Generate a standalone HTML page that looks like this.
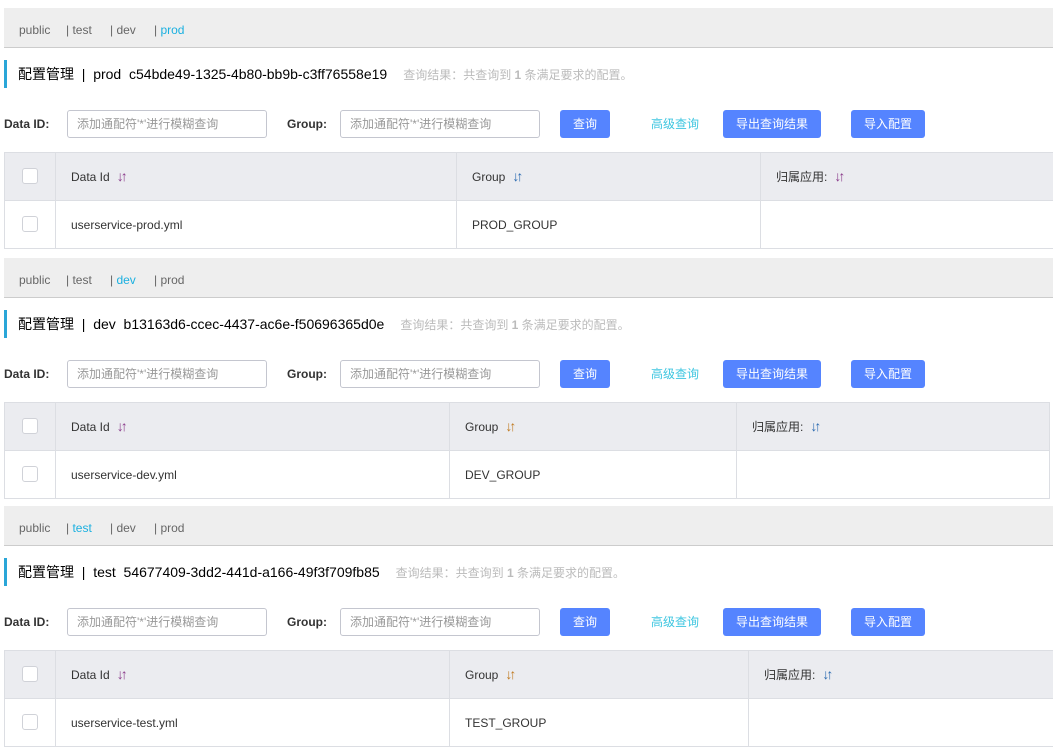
<!DOCTYPE html>
<html><head><meta charset="utf-8"><style>
body{margin:0;width:1053px;height:751px;overflow:hidden;background:#fff;font-family:"Liberation Sans","Noto Sans CJK SC",sans-serif;color:#333;position:relative}
.s{position:absolute;left:0;width:1053px;height:250px}
.tab{position:absolute;left:4px;right:0;top:8px;height:39px;background:#eee;border-bottom:1px solid #ccc;font-size:12px;color:#666}
.tab span{position:absolute;top:15px;line-height:14px}
.tab .a{color:#1ab0e0}
.tit{position:absolute;left:4px;top:60px;height:28px;border-left:3px solid #2aa6d8;padding-left:11px;line-height:28px;font-size:14px;color:#000;white-space:nowrap}
.tit i{font-style:normal;font-size:12px;color:#bbb;margin-left:16px}
.lab{position:absolute;top:117px;line-height:14px;font-size:12px;font-weight:bold;color:#333}
.inp{position:absolute;top:110px;width:198px;height:26px;border:1px solid #c4c6cf;border-radius:3px;font-size:12px;color:#999;line-height:26px;text-indent:9px}
.btn{position:absolute;top:110px;height:28px;background:#5584ff;color:#fff;border-radius:3px;font-size:12px;text-align:center;line-height:28px}
.lnk{position:absolute;left:651px;top:110px;line-height:28px;font-size:12px;color:#3ec6e0}
.tb{position:absolute;left:4px;right:0;top:152px;height:95px;border:1px solid #dcdee3;border-right:none;font-size:12px}
.hd{position:absolute;left:0;right:0;top:0;height:47px;background:#ebecf0;border-bottom:1px solid #dcdee3}
.c{position:absolute;top:0;bottom:0;border-left:1px solid #dcdee3}
.t{position:absolute;font-size:12px;color:#333;line-height:16px;height:16px;white-space:nowrap}
.cb{position:absolute;left:17px;width:14px;height:14px;border:1px solid #d0d2d8;border-radius:3px;background:#fff}
.ar{font-size:14px;margin-left:7px;letter-spacing:-3px;vertical-align:top;line-height:14px}
</style></head><body>

<div class="s" style="top:0">
<div class="tab"><span style="left:15px">public</span><span style="left:62px">| test</span><span style="left:106px">| dev</span><span class="a" style="left:150px"><b style="font-weight:normal;color:#666">|</b> prod</span></div>
<div class="tit">配置管理 &nbsp;|&nbsp; prod &nbsp;c54bde49-1325-4b80-bb9b-c3ff76558e19<i>查询结果：共查询到 <b>1</b> 条满足要求的配置。</i></div>
<div class="lab" style="left:4px">Data ID:</div><div class="inp" style="left:67px">添加通配符'*'进行模糊查询</div>
<div class="lab" style="left:287px">Group:</div><div class="inp" style="left:340px">添加通配符'*'进行模糊查询</div>
<div class="btn" style="left:560px;width:50px">查询</div><div class="lnk">高级查询</div>
<div class="btn" style="left:723px;width:98px">导出查询结果</div><div class="btn" style="left:851px;width:74px">导入配置</div>
<div class="tb"><div class="hd"></div>
<div class="c" style="left:50px"></div><div class="c" style="left:451px"></div><div class="c" style="left:755px"></div>
<div class="cb" style="top:15px"></div><div class="cb" style="top:63px"></div>
<div class="t" style="left:66px;top:16px">Data Id<span class="ar" style="color:#8a3a8a">↓↑</span></div>
<div class="t" style="left:467px;top:16px">Group<span class="ar" style="color:#2a6ab0">↓↑</span></div>
<div class="t" style="left:771px;top:16px">归属应用:<span class="ar" style="color:#8a3a8a">↓↑</span></div>
<div class="t" style="left:66px;top:64px">userservice-prod.yml</div>
<div class="t" style="left:467px;top:64px">PROD_GROUP</div>
</div></div>

<div class="s" style="top:250px">
<div class="tab"><span style="left:15px">public</span><span style="left:62px">| test</span><span class="a" style="left:106px"><b style="font-weight:normal;color:#666">|</b> dev</span><span style="left:150px">| prod</span></div>
<div class="tit">配置管理 &nbsp;|&nbsp; dev &nbsp;b13163d6-ccec-4437-ac6e-f50696365d0e<i>查询结果：共查询到 <b>1</b> 条满足要求的配置。</i></div>
<div class="lab" style="left:4px">Data ID:</div><div class="inp" style="left:67px">添加通配符'*'进行模糊查询</div>
<div class="lab" style="left:287px">Group:</div><div class="inp" style="left:340px">添加通配符'*'进行模糊查询</div>
<div class="btn" style="left:560px;width:50px">查询</div><div class="lnk">高级查询</div>
<div class="btn" style="left:723px;width:98px">导出查询结果</div><div class="btn" style="left:851px;width:74px">导入配置</div>
<div class="tb" style="right:3px;border-right:1px solid #dcdee3"><div class="hd"></div>
<div class="c" style="left:50px"></div><div class="c" style="left:444px"></div><div class="c" style="left:731px"></div>
<div class="cb" style="top:15px"></div><div class="cb" style="top:63px"></div>
<div class="t" style="left:66px;top:16px">Data Id<span class="ar" style="color:#8a3a8a">↓↑</span></div>
<div class="t" style="left:460px;top:16px">Group<span class="ar" style="color:#c07a20">↓↑</span></div>
<div class="t" style="left:747px;top:16px">归属应用:<span class="ar" style="color:#2a6ab0">↓↑</span></div>
<div class="t" style="left:66px;top:64px">userservice-dev.yml</div>
<div class="t" style="left:460px;top:64px">DEV_GROUP</div>
</div></div>

<div class="s" style="top:498px">
<div class="tab"><span style="left:15px">public</span><span class="a" style="left:62px"><b style="font-weight:normal;color:#666">|</b> test</span><span style="left:106px">| dev</span><span style="left:150px">| prod</span></div>
<div class="tit">配置管理 &nbsp;|&nbsp; test &nbsp;54677409-3dd2-441d-a166-49f3f709fb85<i>查询结果：共查询到 <b>1</b> 条满足要求的配置。</i></div>
<div class="lab" style="left:4px">Data ID:</div><div class="inp" style="left:67px">添加通配符'*'进行模糊查询</div>
<div class="lab" style="left:287px">Group:</div><div class="inp" style="left:340px">添加通配符'*'进行模糊查询</div>
<div class="btn" style="left:560px;width:50px">查询</div><div class="lnk">高级查询</div>
<div class="btn" style="left:723px;width:98px">导出查询结果</div><div class="btn" style="left:851px;width:74px">导入配置</div>
<div class="tb"><div class="hd"></div>
<div class="c" style="left:50px"></div><div class="c" style="left:444px"></div><div class="c" style="left:743px"></div>
<div class="cb" style="top:15px"></div><div class="cb" style="top:63px"></div>
<div class="t" style="left:66px;top:16px">Data Id<span class="ar" style="color:#8a3a8a">↓↑</span></div>
<div class="t" style="left:460px;top:16px">Group<span class="ar" style="color:#c07a20">↓↑</span></div>
<div class="t" style="left:759px;top:16px">归属应用:<span class="ar" style="color:#2a6ab0">↓↑</span></div>
<div class="t" style="left:66px;top:64px">userservice-test.yml</div>
<div class="t" style="left:460px;top:64px">TEST_GROUP</div>
</div></div>
</body></html>
